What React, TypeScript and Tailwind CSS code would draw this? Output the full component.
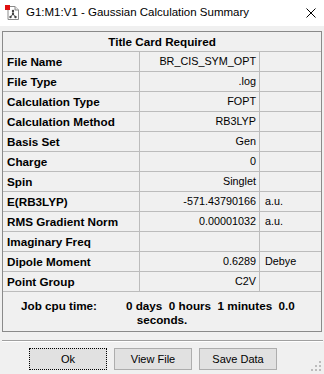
import React from "react";

const rows: [string, string, string][] = [
  ["File Name", "BR_CIS_SYM_OPT", ""],
  ["File Type", ".log", ""],
  ["Calculation Type", "FOPT", ""],
  ["Calculation Method", "RB3LYP", ""],
  ["Basis Set", "Gen", ""],
  ["Charge", "0", ""],
  ["Spin", "Singlet", ""],
  ["E(RB3LYP)", "-571.43790166", "a.u."],
  ["RMS Gradient Norm", "0.00001032", "a.u."],
  ["Imaginary Freq", "", ""],
  ["Dipole Moment", "0.6289", "Debye"],
  ["Point Group", "C2V", ""],
];

function AppIcon() {
  return (
    <svg width="16" height="16" viewBox="0 0 16 16">
      <path d="M3 1.5h7l3.5 3.5v9.5H3z" fill="#fff" stroke="#8a8a8a" />
      <path d="M10 1.5v3.5h3.5" fill="#e8e8e8" stroke="#8a8a8a" />
      <rect x="0" y="0" width="5" height="5" fill="#e01010" />
      <path d="M8 6v3M8 9l-2.5 3M8 9l2.5 3" stroke="#555" strokeWidth="1" fill="none" />
      <circle cx="8" cy="6" r="1.2" fill="#444" />
      <circle cx="8" cy="9" r="1.2" fill="#444" />
      <circle cx="5.5" cy="12" r="1.2" fill="#444" />
      <circle cx="10.5" cy="12" r="1.2" fill="#444" />
    </svg>
  );
}

export default function App() {
  const ui = { fontFamily: '"Liberation Sans", Arial, sans-serif' };
  return (
    <div className="w-[324px] h-[374px] bg-[#f0f0f0] overflow-hidden relative" style={ui}>
      {/* title bar */}
      <div className="h-[26px] bg-white flex items-center">
        <div className="ml-[5px] w-[16px] h-[16px] flex">
          <AppIcon />
        </div>
        <div
          className="ml-[5px] text-[11.5px] text-black leading-none"
          style={{ fontFamily: '"Liberation Sans", Arial, sans-serif' }}
        >
          G1:M1:V1 - Gaussian Calculation Summary
        </div>
        <div className="ml-auto mr-[8px] w-[10px] h-[10px] flex">
          <svg width="10" height="10" viewBox="0 0 10 10">
            <path d="M0.5 0.5L9.5 9.5M9.5 0.5L0.5 9.5" stroke="#000" strokeWidth="1" />
          </svg>
        </div>
      </div>

      {/* body */}
      <div className="pt-[5px]">
        <div className="ml-[2px] w-[320px] border border-[#8a8a8a] flex flex-col">
          <div className="h-[20px] border-b border-[#bcbcbc] flex items-center justify-center font-bold text-[11.7px] text-black">
            Title Card Required
          </div>
          {rows.map(([label, value, unit]) => (
            <div key={label} className="h-[20px] border-b border-[#bcbcbc] flex text-black">
              <div className="w-[137px] border-r border-[#bcbcbc] flex items-center pl-[4px] font-bold text-[11.7px] whitespace-nowrap">
                {label}
              </div>
              <div className="w-[120px] border-r border-[#bcbcbc] flex items-center justify-end pr-[3px] text-[10.8px] whitespace-nowrap">
                {value}
              </div>
              <div className="flex-1 flex items-center pl-[5px] text-[10.8px] whitespace-nowrap">
                {unit}
              </div>
            </div>
          ))}
          <div className="h-[39px] pt-[7px] font-bold text-[11.7px] text-black leading-[14px]">
            <div className="flex whitespace-pre">
              <span className="ml-[18px]">Job cpu time:</span>
              <span className="ml-[29px]">0 days  0 hours  1 minutes  0.0</span>
            </div>
            <div className="text-center">seconds.</div>
          </div>
        </div>

        {/* separator */}
        <div className="mt-[8px] ml-[2px] mr-[1px] border-t border-[#a0a0a0] border-b border-b-white" />

        {/* buttons */}
        <div className="mt-[6px] ml-[29px] flex gap-[7px] text-[11px] text-black">
          <button className="w-[78px] h-[22px] bg-[#e1e1e1] border border-dotted border-black flex items-center justify-center">
            <span className="outline-none">Ok</span>
          </button>
          <button className="w-[78px] h-[22px] bg-[#e1e1e1] border border-[#adadad] flex items-center justify-center">
            View File
          </button>
          <button className="w-[78px] h-[22px] bg-[#e1e1e1] border border-[#adadad] flex items-center justify-center">
            Save Data
          </button>
        </div>
      </div>

      {/* resize grip */}
      <svg className="absolute right-[3px] bottom-[3px]" width="10" height="10" viewBox="0 0 10 10">
        <rect x="8" y="0" width="2" height="2" fill="#bcbcbc" />
        <rect x="4" y="4" width="2" height="2" fill="#bcbcbc" />
        <rect x="8" y="4" width="2" height="2" fill="#bcbcbc" />
        <rect x="0" y="8" width="2" height="2" fill="#bcbcbc" />
        <rect x="4" y="8" width="2" height="2" fill="#bcbcbc" />
        <rect x="8" y="8" width="2" height="2" fill="#bcbcbc" />
      </svg>
    </div>
  );
}
